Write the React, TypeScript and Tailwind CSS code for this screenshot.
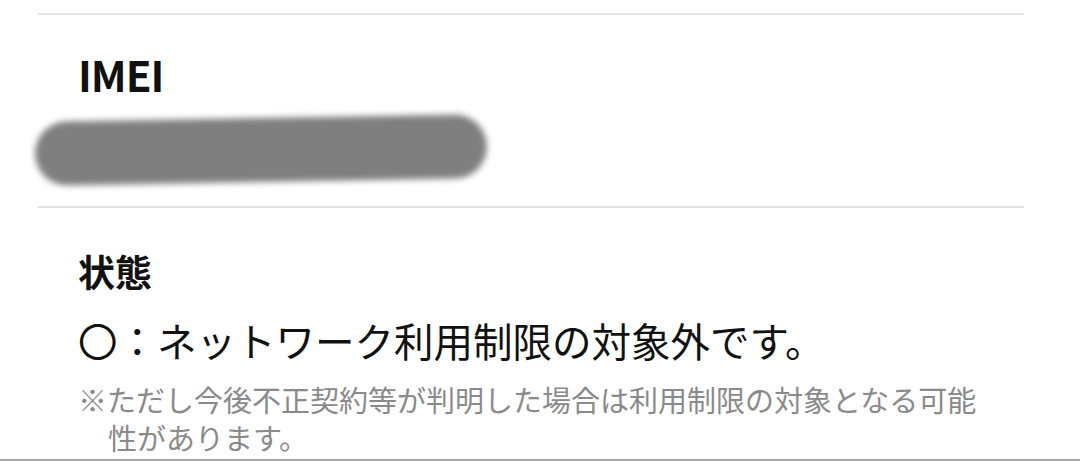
import React from "react";

export default function App() {
  const font = { fontFamily: '"Noto Sans CJK JP", "Noto Sans", sans-serif' };
  return (
    <div
      className="w-[1080px] h-[461px] bg-white overflow-hidden flex flex-col"
      style={font}
    >
      <div className="ml-[38px] w-[986px] pt-[13px] flex flex-col">
        <div className="h-[2px] bg-[#e2e2e2]" />
        <div className="pl-[40px] mt-[38px] text-[42px] leading-[42px] font-bold text-[#111] tracking-[-1px]">
          IMEI
        </div>
        <div className="mt-[19px] h-[72px] flex items-center">
          <div className="ml-[-3px] w-[452px] h-[64px] rounded-full bg-[#7f7f7f] blur-[3px] -rotate-[1deg]" />
        </div>
        <div className="mt-[20px] h-[2px] bg-[#e2e2e2]" />
        <div className="pl-[40px] mt-[45px] text-[37px] leading-[37px] font-bold text-[#111]">
          状態
        </div>
        <div className="pl-[40px] mt-[31px] text-[39.5px] leading-[38px] text-[#111]">
          〇：ネットワーク利用制限の対象外です。
        </div>
        <div className="pl-[70px] -indent-[30px] mt-[21px] text-[29px] leading-[38px] text-[#8a8a8a] pr-[20px]">
          ※ただし今後不正契約等が判明した場合は利用制限の対象となる可能性があります。
        </div>
      </div>
      <div className="mt-auto h-[2px] bg-[#a8a8a8]" />
    </div>
  );
}
